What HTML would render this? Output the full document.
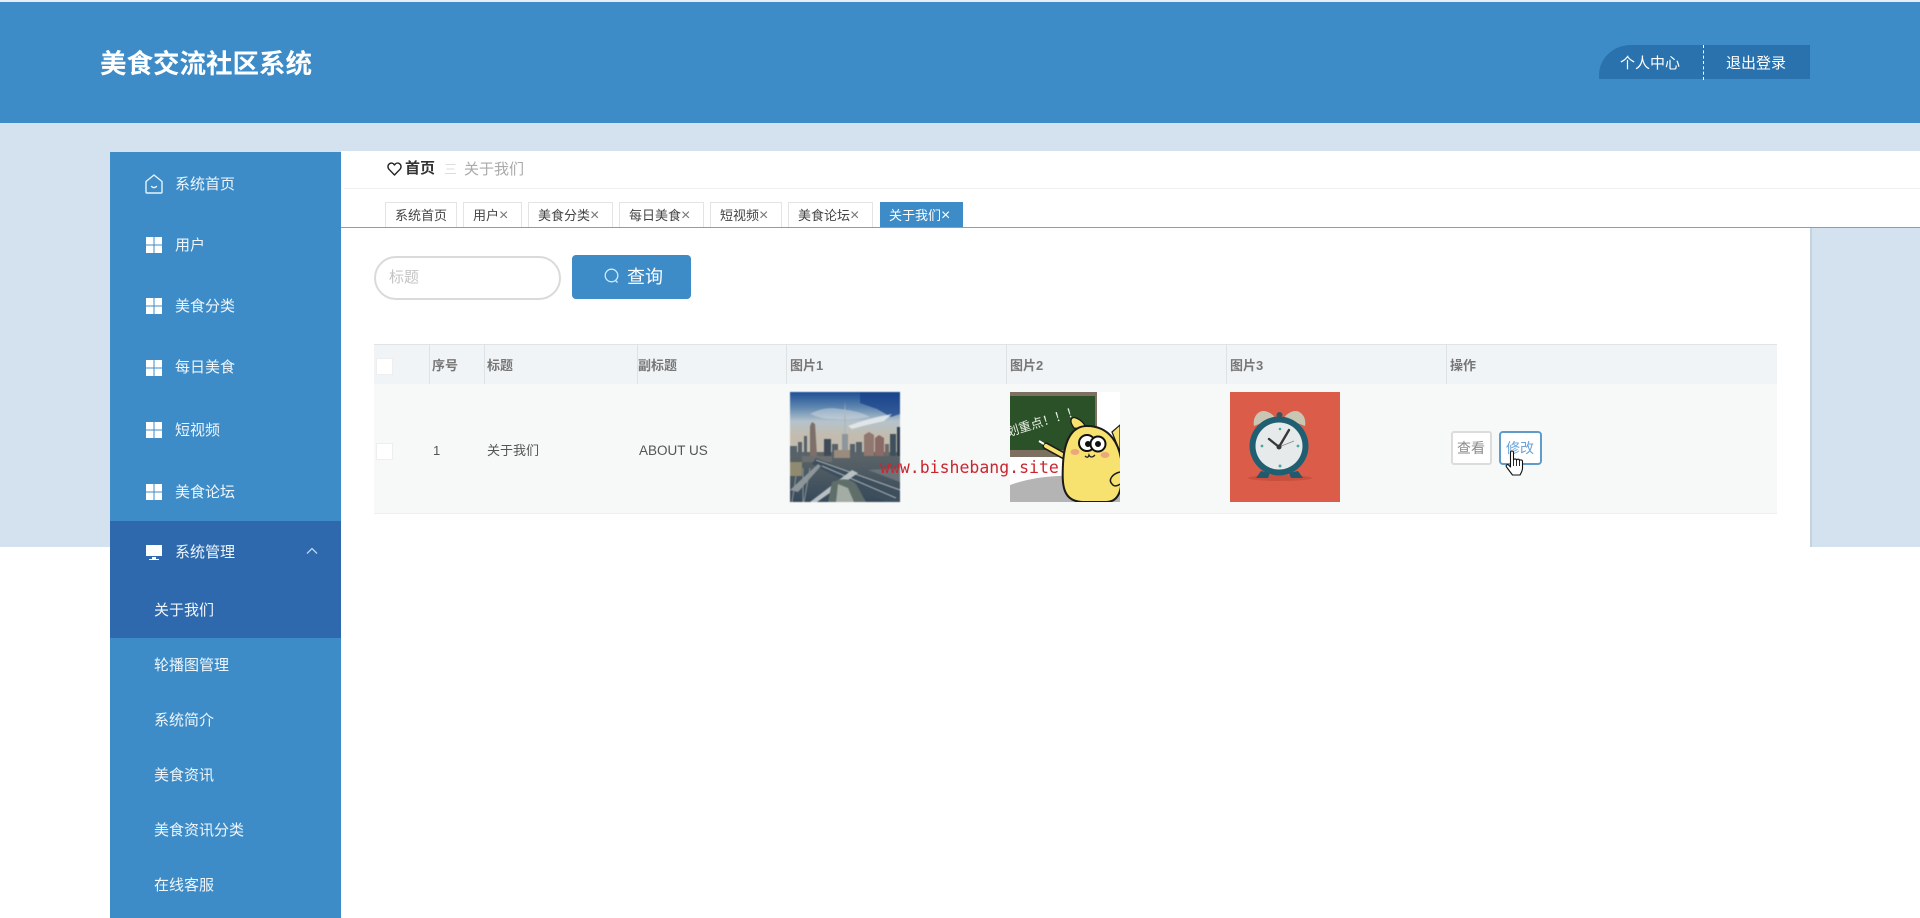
<!DOCTYPE html>
<html lang="zh-CN">
<head>
<meta charset="utf-8">
<title>美食交流社区系统</title>
<style>
html,body{margin:0;padding:0;width:1920px;height:918px;overflow:hidden;background:#fff}
body{position:relative;font-family:"Liberation Sans","Noto Sans CJK SC",sans-serif}
.a{position:absolute;display:block}
.t{position:absolute;white-space:nowrap;line-height:20px;height:20px}
.m{color:#eef6fb;font-size:15px;left:175px}
.s{color:#eef6fb;font-size:15px;left:154px}
.ic{position:absolute;left:146px;width:16px;height:16px}
.tab{position:absolute;top:202px;height:26px;box-sizing:border-box;background:#fff;border:1px solid #e4e4e4;border-bottom:none;font-size:13px;line-height:26px;color:#444;white-space:nowrap;padding-left:9px}
.tab i{font-style:normal;color:#777;font-size:16px;line-height:20px;margin-left:0}
.vl{position:absolute;top:344px;width:1px;height:40px;background:#dde2e5}
.h{position:absolute;top:356px;font-size:13px;font-weight:bold;color:#777;line-height:20px;white-space:nowrap}
.cb{position:absolute;left:377px;width:15px;height:15px;background:#fff;border:1px solid #eee}
svg{display:block;overflow:hidden}
</style>
</head>
<body>
<div class="a" style="left:0;top:0;width:1920px;height:2px;background:#e6eff6"></div>
<div class="a" style="left:0;top:2px;width:1920px;height:121px;background:#3d8cc8"></div>
<div class="a" style="left:0;top:123px;width:1920px;height:424px;background:#d4e2ef"></div>
<div class="a" style="left:341px;top:151px;width:1579px;height:77px;background:#fff"></div>
<div class="a" style="left:341px;top:228px;width:1469px;height:690px;background:#fff"></div>
<div class="a" style="left:0;top:547px;width:1810px;height:371px;background:#fff"></div>

<div class="t" style="left:100px;top:49px;height:30px;line-height:30px;font-size:26.5px;font-weight:bold;color:#fff">美食交流社区系统</div>

<div class="a" style="left:1599px;top:45px;width:211px;height:34px;background:#2a72ae;border-top-left-radius:32px 30px"></div>
<div class="a" style="left:1703px;top:45px;width:0;height:35px;border-left:1px dashed #fff"></div>
<div class="t" style="left:1620px;top:54px;font-size:15px;color:#fff">个人中心</div>
<div class="t" style="left:1726px;top:54px;font-size:15px;color:#fff">退出登录</div>

<!-- sidebar -->
<div class="a" style="left:110px;top:152px;width:231px;height:766px;background:#3d8cc8"></div>
<div class="a" style="left:110px;top:521px;width:231px;height:117px;background:#2e69ae"></div>

<svg class="a" style="left:145px;top:174px" width="18" height="20" viewBox="0 0 18 20" fill="none" stroke="#e6f4fb" stroke-width="1.4" stroke-linejoin="round" stroke-linecap="round"><path d="M1 7.500 9 1l8 6.500V18a1 1 0 0 1-1 1H2a1 1 0 0 1-1-1z"/><path d="M6.500 12.500q2.500 2.200 5 0"/></svg>
<div class="t m" style="top:175px">系统首页</div>

<svg class="ic" style="top:237px" viewBox="0 0 16 16" fill="#fff"><path d="M0 0h7.500v7.500H0zM8.500 0H16v7.500H8.500zM0 8.500h7.500V16H0zM8.500 8.500H16V16H8.500z"/></svg>
<div class="t m" style="top:236px">用户</div>
<svg class="ic" style="top:298px" viewBox="0 0 16 16" fill="#fff"><path d="M0 0h7.500v7.500H0zM8.500 0H16v7.500H8.500zM0 8.500h7.500V16H0zM8.500 8.500H16V16H8.500z"/></svg>
<div class="t m" style="top:297px">美食分类</div>
<svg class="ic" style="top:360px" viewBox="0 0 16 16" fill="#fff"><path d="M0 0h7.500v7.500H0zM8.500 0H16v7.500H8.500zM0 8.500h7.500V16H0zM8.500 8.500H16V16H8.500z"/></svg>
<div class="t m" style="top:358px">每日美食</div>
<svg class="ic" style="top:422px" viewBox="0 0 16 16" fill="#fff"><path d="M0 0h7.500v7.500H0zM8.500 0H16v7.500H8.500zM0 8.500h7.500V16H0zM8.500 8.500H16V16H8.500z"/></svg>
<div class="t m" style="top:421px">短视频</div>
<svg class="ic" style="top:484px" viewBox="0 0 16 16" fill="#fff"><path d="M0 0h7.500v7.500H0zM8.500 0H16v7.500H8.500zM0 8.500h7.500V16H0zM8.500 8.500H16V16H8.500z"/></svg>
<div class="t m" style="top:483px">美食论坛</div>

<svg class="ic" style="top:545px" viewBox="0 0 16 16" fill="#fff"><path d="M0 0h16v11H0zM6 12h4v2h3v1H3v-1h3z"/></svg>
<div class="t m" style="top:543px">系统管理</div>
<svg class="a" style="left:306px;top:547px" width="12" height="8" viewBox="0 0 12 8" fill="none" stroke="#b9d9ef" stroke-width="1.300"><path d="M1 6.500 6 1.500l5 5"/></svg>

<div class="t s" style="top:601px">关于我们</div>
<div class="t s" style="top:656px">轮播图管理</div>
<div class="t s" style="top:711px">系统简介</div>
<div class="t s" style="top:766px">美食资讯</div>
<div class="t s" style="top:821px">美食资讯分类</div>
<div class="t s" style="top:876px">在线客服</div>

<!-- breadcrumb -->
<svg class="a" style="left:387px;top:162px" width="15" height="14" viewBox="0 0 15 14" fill="none" stroke="#222" stroke-width="1.400" stroke-linejoin="round"><path d="M7.500 13 2 7.300C.3 5.400.8 2.600 2.800 1.500c1.800-1 3.700-.2 4.700 1.500 1-1.700 2.900-2.500 4.700-1.500 2 1.100 2.500 3.900.8 5.800z"/></svg>
<div class="t" style="left:405px;top:159px;font-size:15px;font-weight:bold;color:#333">首页</div>
<div class="t" style="left:444px;top:160px;font-size:13px;color:#ddd">三</div>
<div class="t" style="left:464px;top:160px;font-size:15px;color:#aaa">关于我们</div>
<div class="a" style="left:344px;top:188px;width:1576px;height:1px;background:#eeeeee"></div>

<!-- tabs -->
<div class="tab" style="left:385px;width:72px">系统首页</div>
<div class="tab" style="left:463px;width:59px">用户<i>×</i></div>
<div class="tab" style="left:528px;width:85px">美食分类<i>×</i></div>
<div class="tab" style="left:619px;width:85px">每日美食<i>×</i></div>
<div class="tab" style="left:710px;width:72px">短视频<i>×</i></div>
<div class="tab" style="left:788px;width:85px">美食论坛<i>×</i></div>
<div class="tab" style="left:880px;width:83px;background:#3d8cc8;border-color:#3d8cc8;color:#fff;padding-left:8px">关于我们<i style="color:#fff">×</i></div>
<div class="a" style="left:341px;top:227px;width:1579px;height:1px;background:#9a9a9a"></div>

<!-- search -->
<div class="a" style="left:374px;top:256px;width:187px;height:44px;box-sizing:border-box;border:2px solid #dadada;border-radius:22px;background:#fff"></div>
<div class="t" style="left:389px;top:268px;font-size:15px;color:#c4c4c4">标题</div>
<div class="a" style="left:572px;top:255px;width:119px;height:44px;background:#3d8cc8;border-radius:4px"></div>
<svg class="a" style="left:603px;top:268px" width="18" height="16" viewBox="0 0 18 16" fill="none" stroke="#cfeaff" stroke-width="1.300"><circle cx="8.500" cy="7.500" r="6.300"/><path d="M12.500 12.500l2 2"/></svg>
<div class="t" style="left:627px;top:267px;font-size:18px;color:#fff">查询</div>

<!-- table -->
<div class="a" style="left:374px;top:344px;width:1403px;height:1px;background:#dfe4e6"></div>
<div class="a" style="left:374px;top:345px;width:1403px;height:39px;background:#f1f4f6"></div>
<div class="a" style="left:374px;top:384px;width:1403px;height:129px;background:#f7f8f8"></div>
<div class="a" style="left:374px;top:513px;width:1403px;height:1px;background:#eef0f0"></div>
<div class="vl" style="left:429px"></div>
<div class="vl" style="left:484px"></div>
<div class="vl" style="left:637px"></div>
<div class="vl" style="left:786px"></div>
<div class="vl" style="left:1006px"></div>
<div class="vl" style="left:1226px"></div>
<div class="vl" style="left:1446px"></div>
<div class="cb" style="top:358px;left:376px"></div>
<div class="cb" style="top:443px;left:376px"></div>
<div class="h" style="left:432px">序号</div>
<div class="h" style="left:487px">标题</div>
<div class="h" style="left:638px">副标题</div>
<div class="h" style="left:790px">图片1</div>
<div class="h" style="left:1010px">图片2</div>
<div class="h" style="left:1230px">图片3</div>
<div class="h" style="left:1450px">操作</div>

<div class="t" style="left:433px;top:441px;font-size:13px;color:#555">1</div>
<div class="t" style="left:487px;top:441px;font-size:13px;color:#555">关于我们</div>
<div class="t" style="left:639px;top:441px;font-size:13.500px;color:#555">ABOUT US</div>

<!-- image 1: skyline -->
<svg class="a" style="left:790px;top:392px;filter:blur(.4px)" width="110" height="110" viewBox="0 0 110 110">
<defs><linearGradient id="sky" x1="0" y1="0" x2="0" y2="1"><stop offset="0" stop-color="#1f4f96"/><stop offset=".22" stop-color="#5f87b0"/><stop offset=".42" stop-color="#b5c3cc"/><stop offset=".62" stop-color="#c3bcae"/></linearGradient>
<linearGradient id="gr" x1="0" y1="0" x2="0" y2="1"><stop offset="0" stop-color="#5d6668"/><stop offset="1" stop-color="#37495a"/></linearGradient></defs>
<rect width="110" height="70" fill="url(#sky)"/>
<path d="M70 0h40v22l-9 3-14-8-17-6z" fill="#17428a" opacity=".75"/>
<path d="M20 22q14-8 30-5 20 2 30 8-20 3-35 2-14 0-25-5z" fill="#d9e0e6" opacity=".45"/>
<path d="M58 34q20-8 44-12l-8 7q-18 4-32 8z" fill="#eef1f3" opacity=".75"/>
<rect y="60" width="110" height="50" fill="url(#gr)"/>
<path d="M54 60V28l1-18 1 18v32z" fill="#b0b9bc"/>
<path d="M52 62h6V42h-6z" fill="#8d979b"/>
<g fill="#56616a">
<rect x="0" y="54" width="7" height="10"/><rect x="8" y="50" width="4" height="14"/><rect x="14" y="44" width="3" height="20"/>
<rect x="34" y="47" width="7" height="17" fill="#3f4c58"/><rect x="42" y="52" width="6" height="12"/><rect x="60" y="52" width="5" height="12"/><rect x="66" y="50" width="6" height="14"/>
<rect x="100" y="42" width="6" height="22" fill="#3f4f5c"/><rect x="107" y="35" width="3" height="29" fill="#2f3f50"/>
</g>
<path d="M20 64V34l2-4 3 2 2 32z" fill="#7d6f6a"/>
<path d="M74 64V43l5-3 5 3v21z" fill="#90776f"/>
<path d="M85 64V46l4-3 5 3v18z" fill="#8a6a66"/>
<path d="M95 64V52h4v12z" fill="#6f6a68"/>
<path d="M44 64V58h16v8H44z" fill="#9a8b7d"/>
<path d="M0 70h12v14H0z" fill="#8f8a70"/>
<path d="M12 64h30v6H12z" fill="#6c6f70"/>
<path d="M26 66 110 100v10H96L22 72z" fill="#3d4e5c"/>
<path d="M26 68 110 98M32 74 106 106" stroke="#a8b0b4" stroke-width="1.100" fill="none"/>
<path d="M62 78 20 110h7L68 81z" fill="#b8c0c3"/>
<path d="M0 98 28 72l3 2L8 100z" fill="#8d979b"/>
<path d="M42 90q16-6 24 2l10 18H38z" fill="#5f6e68"/>
<path d="M48 92l10 4 6 14H46z" fill="#a4aca6"/>
<path d="M13 76v34M20 76l-6 34M6 84l-4 26" stroke="#8a9398" stroke-width="1" fill="none"/>
<path d="M78 78 110 76v14z" fill="#6a7478"/>
</svg>

<!-- image 2: character -->
<svg class="a" style="left:1010px;top:392px;filter:blur(.3px)" width="110" height="110" viewBox="0 0 110 110">
<rect width="110" height="110" fill="#fff"/>
<rect width="87" height="65" fill="#7d7060"/>
<rect y="4" width="85" height="54" fill="#2a5128"/>
<path d="M0 93Q30 82 70 84L110 88V110H0z" fill="#b4b4b4"/>
<text x="-2" y="44" transform="rotate(-17 0 44)" fill="#e8efe4" font-size="12.500" font-family="'Noto Sans CJK SC',sans-serif">划重点！！！</text>
<path d="M36 54 56 65" stroke="#1a1a1a" stroke-width="7" stroke-linecap="round" fill="none"/>
<path d="M36 54 56 65" stroke="#f8e26f" stroke-width="4" stroke-linecap="round" fill="none"/>
<path d="M34 52 29 49" stroke="#fff" stroke-width="2"/>
<path d="M64 36C58 28 62 24 66 26 72 28 76 34 77 38z" fill="#f8e26f" stroke="#1a1a1a" stroke-width="1.300"/>
<path d="M102 40 110 33V60z" fill="#f8e26f" stroke="#1a1a1a" stroke-width="1.200"/>
<path d="M77 34C60 34 54 52 53 72 52 92 52 109 72 110H96C108 110 112 100 112 80 112 50 98 34 77 34z" fill="#f8e26f" stroke="#1a1a1a" stroke-width="2"/>
<circle cx="77" cy="51" r="8" fill="#fff" stroke="#111" stroke-width="2"/>
<circle cx="88" cy="52" r="7.500" fill="#fff" stroke="#111" stroke-width="2"/>
<circle cx="78" cy="52" r="3" fill="#111"/>
<circle cx="88" cy="52" r="3" fill="#111"/>
<ellipse cx="65" cy="60" rx="4.500" ry="3" fill="#eda77d"/>
<ellipse cx="95" cy="63" rx="4.500" ry="3" fill="#eda77d"/>
<path d="M75 64q3 3 4-1 2 4 6 0" stroke="#222" stroke-width="1.300" fill="none"/>
<path d="M110 80C102 82 98 88 102 92 104 95 108 94 110 92" fill="#f8e26f" stroke="#1a1a1a" stroke-width="1.500"/>
</svg>

<!-- image 3: clock -->
<svg class="a" style="left:1230px;top:392px;filter:blur(.3px)" width="110" height="110" viewBox="0 0 110 110">
<rect width="110" height="110" fill="#db5d49"/>
<ellipse cx="50" cy="86" rx="32" ry="3" fill="#c9503e"/>
<path d="M24 34C22 24 30 16 38 20 42 22 44 24 45 26z" fill="#c9c6b4"/>
<path d="M75 34C77 24 69 16 61 20 57 22 55 24 54 26z" fill="#c9c6b4"/>
<circle cx="49.500" cy="23" r="3" fill="#38545f"/>
<path d="M31 79 26 86h12l2-5zM68 79l5 7H61l-2-5z" fill="#205a6c"/>
<circle cx="49" cy="54" r="29.500" fill="#205f72"/>
<circle cx="49" cy="54" r="23.500" fill="#e7eaea"/>
<circle cx="50" cy="37" r="1.300" fill="#4ca89c"/>
<circle cx="50" cy="74" r="1.500" fill="#4ca89c"/>
<circle cx="32" cy="54" r="1.400" fill="#4ca89c"/>
<circle cx="68" cy="54" r="1.400" fill="#4ca89c"/>
<path d="M49 55 59 38" stroke="#38383a" stroke-width="2.400" stroke-linecap="round"/>
<path d="M49 55 39 47" stroke="#38383a" stroke-width="2.400" stroke-linecap="round"/>
<path d="M49 55 64 49" stroke="#888" stroke-width=".8"/>
<circle cx="49" cy="55" r="2.500" fill="#38383a"/>
</svg>

<!-- watermark -->
<div class="t" style="left:880px;top:458px;font-family:'DejaVu Sans Mono',monospace;font-size:16.500px;color:#cb2630">www.bishebang.site</div>

<!-- buttons -->
<div class="a" style="left:1451px;top:431px;width:41px;height:34px;box-sizing:border-box;background:#fff;border:2px solid #dcdcdc;border-radius:3px"></div>
<div class="t" style="left:1457px;top:438px;font-size:14px;color:#8a8a8a">查看</div>
<div class="a" style="left:1499px;top:431px;width:43px;height:34px;box-sizing:border-box;background:#fff;border:2px solid #5f9cca;border-radius:4px"></div>
<div class="t" style="left:1506px;top:438px;font-size:14px;color:#6ba3d8">修改</div>
<svg class="a" style="left:1505px;top:450px" width="20" height="26" viewBox="0 0 20 26"><path d="M5.500 2.500c0-2 3-2 3 0V10c.5-1.500 3-1.500 3 .2.500-1.400 3-1.400 3 .4.500-1.100 3-1 3 .8V18c0 3-1.500 5-2.500 7H7.500L1.500 17c-1.200-1.800 1-3.200 2.300-1.800l1.700 1.800z" fill="#fff" stroke="#111" stroke-width="1.100" stroke-linejoin="round"/><path d="M8.500 10v6M11.500 10.500v5.500M14.500 11v5" stroke="#111" stroke-width=".9" fill="none"/></svg>

<!-- right panel edge -->
<div class="a" style="left:1810px;top:228px;width:2px;height:319px;background:#c3d2e0"></div>
</body>
</html>
